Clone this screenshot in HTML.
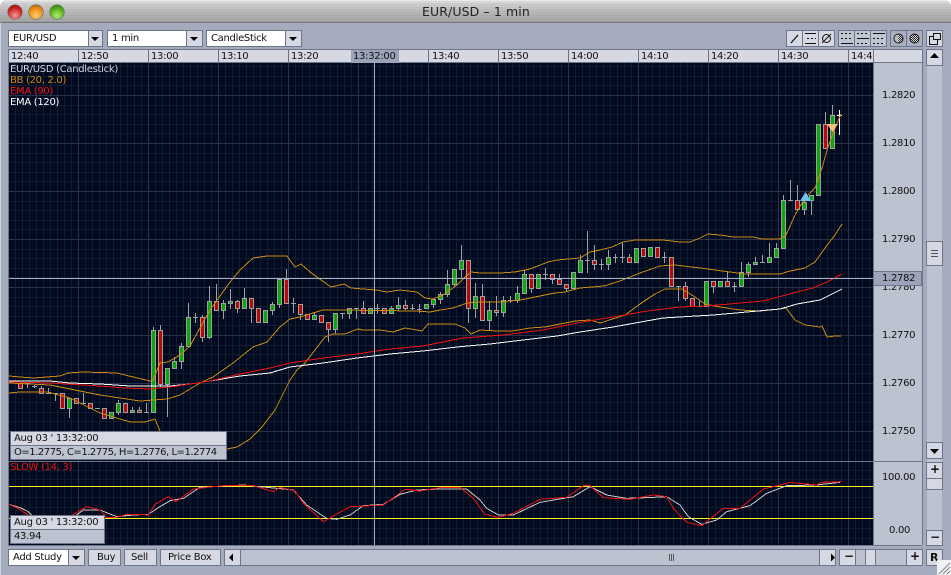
<!DOCTYPE html>
<html><head><meta charset="utf-8"><style>
html,body{margin:0;padding:0;width:951px;height:575px;overflow:hidden;background:#fff}
#w{position:absolute;left:0;top:0;width:951px;height:575px;background:#a3abbd;overflow:hidden;border-radius:7px 7px 0 0}
#tb{position:absolute;left:0;top:0;width:951px;height:22px;background:repeating-linear-gradient(rgba(255,255,255,.05) 0 1px,rgba(0,0,0,.03) 1px 2px),linear-gradient(#ececec,#cfcfcf 15%,#b4b4b4 60%,#a0a0a0);border-bottom:1px solid #777}
.dot{position:absolute;top:5px;width:14px;height:14px;border-radius:50%;box-shadow:0 0 0 .5px #555}
.t{position:absolute;font-family:"DejaVu Sans",sans-serif;font-size:10px;line-height:13px;color:#111;white-space:pre;letter-spacing:-.3px}
.b{position:absolute;box-sizing:border-box;border:1px solid #6d7589;background:#d6d9e3}
.w{background:#fff}
.a{position:absolute;width:0;height:0;border-left:4px solid transparent;border-right:4px solid transparent;border-top:4px solid #000}
svg{position:absolute;left:0;top:0}
</style></head><body><div id="w">
<div id="tb"></div>
<div style="position:absolute;left:0;top:23px;width:1px;height:552px;background:#d0d3dc"></div>
<div class="dot" style="left:8px;background:radial-gradient(circle at 50% 75%,#f59a9a,#c82020 60%,#701010)"></div>
<div class="dot" style="left:29px;background:radial-gradient(circle at 50% 75%,#fbd070,#e88a10 60%,#8a4a05)"></div>
<div class="dot" style="left:50px;background:radial-gradient(circle at 50% 75%,#b0f070,#50a818 60%,#2a6a08)"></div>
<div class="t" style="left:422px;top:4px;font-size:12.5px;line-height:15px;color:#222;letter-spacing:.1px">EUR/USD – 1 min</div>

<div class="b w" style="left:8px;top:30px;width:81px;height:17px"></div><div class="b" style="left:88px;top:30px;width:15px;height:17px"></div><div class="a" style="left:91px;top:37px"></div>
<div class="t" style="left:13px;top:32px">EUR/USD</div>
<div class="b w" style="left:107px;top:30px;width:80px;height:17px"></div><div class="b" style="left:186px;top:30px;width:17px;height:17px"></div><div class="a" style="left:190px;top:37px"></div>
<div class="t" style="left:112px;top:32px">1 min</div>
<div class="b w" style="left:206px;top:30px;width:80px;height:17px"></div><div class="b" style="left:285px;top:30px;width:17px;height:17px"></div><div class="a" style="left:289px;top:37px"></div>
<div class="t" style="left:211px;top:32px">CandleStick</div>

<div class="b" style="left:786px;top:30px;width:17px;height:17px"></div><div class="b" style="left:802px;top:30px;width:17px;height:17px"></div><div class="b" style="left:818px;top:30px;width:17px;height:17px"></div>
<div class="b" style="left:838px;top:30px;width:17px;height:17px;background:#c0c5d2"></div><div class="b" style="left:854px;top:30px;width:17px;height:17px;background:#c0c5d2"></div><div class="b" style="left:870px;top:30px;width:17px;height:17px;background:#c0c5d2"></div>
<div class="b" style="left:890px;top:30px;width:17px;height:17px;background:#a9afbe"></div><div class="b" style="left:906px;top:30px;width:17px;height:17px;background:#a9afbe"></div>
<div class="b" style="left:926px;top:30px;width:17px;height:17px"></div>

<div style="position:absolute;left:8px;top:49px;width:914px;height:14px;background:#d6d9e3;border-top:1px solid #6d7589;border-bottom:1px solid #6d7589;box-sizing:border-box"></div>
<div style="position:absolute;left:351px;top:50px;width:48px;height:13px;background:#9aa3b8"></div>
<div style="position:absolute;left:873px;top:63px;width:49px;height:482px;background:#bcc2cf"></div>
<div style="position:absolute;left:927px;top:49px;width:15px;height:496px;background:#bcc2cf"></div>

<svg width="951" height="575" viewBox="0 0 951 575">
<defs><pattern id="gv" width="7" height="10" patternUnits="userSpaceOnUse" x="1"><rect x="0" width="1" height="10" fill="#121c30"/></pattern>
<pattern id="ht" width="2" height="2" patternUnits="userSpaceOnUse"><rect width="2" height="2" fill="#ddd"/><rect width="1" height="1" fill="#222"/><rect x="1" y="1" width="1" height="1" fill="#222"/></pattern></defs>
<rect x="9" y="63" width="864" height="482" fill="#020a20"/>
<rect x="9" y="63" width="864" height="482" fill="url(#gv)"/>
<path stroke="#121c30" fill="none" shape-rendering="crispEdges" d="M9 66.5H873M9 76.5H873M9 85.5H873M9 105.5H873M9 114.5H873M9 124.5H873M9 133.5H873M9 153.5H873M9 162.5H873M9 172.5H873M9 181.5H873M9 201.5H873M9 210.5H873M9 220.5H873M9 229.5H873M9 249.5H873M9 258.5H873M9 268.5H873M9 277.5H873M9 297.5H873M9 306.5H873M9 316.5H873M9 325.5H873M9 345.5H873M9 354.5H873M9 364.5H873M9 373.5H873M9 393.5H873M9 402.5H873M9 412.5H873M9 421.5H873M9 441.5H873M9 450.5H873M9 470.5H873M9 479.5H873M9 497.5H873M9 507.5H873M9 528.5H873M9 538.5H873"/>
<path stroke="#283248" fill="none" shape-rendering="crispEdges" d="M9 95.5H873M9 143.5H873M9 191.5H873M9 239.5H873M9 287.5H873M9 335.5H873M9 383.5H873M9 431.5H873M78.5 63V545M148.5 63V545M218.5 63V545M288.5 63V545M358.5 63V545M428.5 63V545M498.5 63V545M568.5 63V545M638.5 63V545M708.5 63V545M778.5 63V545M848.5 63V545"/>
<path stroke="#6d7589" fill="none" shape-rendering="crispEdges" d="M8.5 49V545.5H922M78.5 50V63M148.5 50V63M218.5 50V63M288.5 50V63M428.5 50V63M498.5 50V63M568.5 50V63M638.5 50V63M708.5 50V63M778.5 50V63M848.5 50V63M873.5 49V545M922.5 49V545M9 461.5H922"/>

<!-- yellow levels -->
<path stroke="#f8f820" fill="none" shape-rendering="crispEdges" d="M9 486.5H873M9 518.5H873"/>

<!-- wicks -->
<path stroke="#a0a0a0" fill="none" shape-rendering="crispEdges" d="M20.5 383V389M27.5 383V388M25 383.5h5M34.5 385V388M32 386.5h5M41.5 386V394M48.5 388V393M46 393.5h5M55.5 393V401M53 393.5h5M69.5 398V418M83.5 393V404M81 403.5h5M95 408.5h5M118.5 400V415M132.5 407V412M139.5 407V412M146.5 403V412M144 412.5h5M153.5 327V412M160.5 325V387M167.5 368V417M174.5 357V369M181.5 343V369M188.5 303V346M195.5 313V323M193 317.5h5M202.5 315V342M209.5 286V339M216.5 284V310M223.5 300V319M230.5 289V309M237.5 300V313M244.5 288V308M251.5 298V323M258.5 308V323M265.5 310V323M272.5 302V315M279.5 279V308M286.5 269V303M293.5 298V313M291 303.5h5M300.5 304V320M307.5 314V320M314.5 312V319M328.5 322V342M335.5 313V334M342.5 313V319M340 313.5h5M349.5 308V319M356.5 308V319M354 308.5h5M363.5 301V313M377.5 304V314M375 308.5h5M391.5 306V313M398.5 297V311M405.5 300V310M412.5 304V310M410 308.5h5M419.5 304V313M417 309.5h5M433.5 299V308M440.5 292V304M447.5 270V297M454.5 269V287M461.5 245V278M468.5 260V323M475.5 283V318M482.5 284V320M489.5 301V330M496.5 296V316M503.5 296V317M510.5 296V303M508 300.5h5M517.5 286V303M524.5 270V293M531.5 274V293M545.5 268V280M543 274.5h5M552.5 274V284M559.5 274V284M566.5 284V292M580.5 255V272M587.5 231V273M585 260.5h5M594.5 245V270M601.5 259V270M599 264.5h5M608.5 250V270M615.5 254V263M613 257.5h5M622.5 243V263M620 257.5h5M629.5 254V262M664.5 252V263M662 257.5h5M678.5 286V301M676 286.5h5M685.5 282V301M699.5 301V306M697 306.5h5M713.5 281V293M727.5 272V286M734.5 282V292M732 286.5h5M741.5 262V286M748.5 262V277M755.5 257V264M762.5 255V262M760 262.5h5M769.5 243V262M776.5 243V257M783.5 195V248M790.5 180V200M788 200.5h5M797.5 185V209M804.5 200V215M811.5 195V215M825.5 112V148M832.5 105V148"/>
<path stroke="#fff" fill="none" shape-rendering="crispEdges" d="M839.5 110V135M837 115.5h5"/>

<!-- green bodies -->
<path fill="#0aa80a" stroke="#a0a0a0" shape-rendering="crispEdges" d="M67.5 398.5h4v10h-4zM109.5 412.5h4v6h-4zM116.5 403.5h4v9h-4zM130.5 410.5h4v2h-4zM151.5 330.5h4v82h-4zM165.5 368.5h4v16h-4zM172.5 361.5h4v7h-4zM179.5 346.5h4v15h-4zM186.5 317.5h4v29h-4zM207.5 301.5h4v36h-4zM221.5 303.5h4v7h-4zM228.5 301.5h4v2h-4zM242.5 298.5h4v10h-4zM263.5 310.5h4v12h-4zM270.5 304.5h4v6h-4zM277.5 279.5h4v25h-4zM312.5 315.5h4v4h-4zM333.5 313.5h4v16h-4zM347.5 308.5h4v5h-4zM368.5 308.5h4v5h-4zM389.5 308.5h4v5h-4zM396.5 305.5h4v3h-4zM424.5 304.5h4v4h-4zM431.5 299.5h4v5h-4zM438.5 294.5h4v5h-4zM445.5 284.5h4v10h-4zM452.5 269.5h4v15h-4zM459.5 260.5h4v9h-4zM473.5 296.5h4v12h-4zM487.5 310.5h4v10h-4zM501.5 300.5h4v12h-4zM515.5 293.5h4v7h-4zM522.5 274.5h4v19h-4zM536.5 274.5h4v14h-4zM571.5 272.5h4v16h-4zM578.5 260.5h4v12h-4zM606.5 257.5h4v7h-4zM634.5 248.5h4v14h-4zM648.5 247.5h4v9h-4zM704.5 281.5h4v25h-4zM718.5 281.5h4v5h-4zM739.5 272.5h4v14h-4zM746.5 264.5h4v8h-4zM753.5 262.5h4v2h-4zM767.5 257.5h4v5h-4zM774.5 248.5h4v9h-4zM781.5 200.5h4v48h-4zM802.5 202.5h4v7h-4zM809.5 195.5h4v5h-4zM816.5 124.5h4v71h-4zM830.5 115.5h4v33h-4z"/>
<!-- red bodies -->
<path fill="#b80808" stroke="#a0a0a0" shape-rendering="crispEdges" d="M18.5 383.5h4v5h-4zM39.5 388.5h4v5h-4zM60.5 393.5h4v15h-4zM74.5 398.5h4v5h-4zM88.5 403.5h4v5h-4zM102.5 408.5h4v10h-4zM123.5 403.5h4v9h-4zM137.5 410.5h4v2h-4zM158.5 330.5h4v54h-4zM200.5 317.5h4v20h-4zM214.5 301.5h4v9h-4zM235.5 301.5h4v7h-4zM249.5 298.5h4v10h-4zM256.5 308.5h4v14h-4zM284.5 279.5h4v24h-4zM298.5 304.5h4v10h-4zM305.5 314.5h4v5h-4zM319.5 315.5h4v7h-4zM326.5 322.5h4v7h-4zM361.5 308.5h4v5h-4zM382.5 308.5h4v5h-4zM403.5 305.5h4v3h-4zM466.5 260.5h4v48h-4zM480.5 296.5h4v24h-4zM494.5 310.5h4v2h-4zM529.5 274.5h4v14h-4zM550.5 274.5h4v5h-4zM557.5 279.5h4v5h-4zM564.5 284.5h4v4h-4zM592.5 260.5h4v4h-4zM627.5 257.5h4v5h-4zM641.5 248.5h4v8h-4zM655.5 247.5h4v10h-4zM669.5 257.5h4v29h-4zM683.5 286.5h4v12h-4zM690.5 298.5h4v8h-4zM711.5 281.5h4v5h-4zM725.5 281.5h4v5h-4zM795.5 200.5h4v9h-4zM823.5 124.5h4v24h-4z"/>

<!-- Bollinger -->
<g fill="none" stroke="#c98a10" stroke-width="1" shape-rendering="crispEdges">
<polyline points="9,376 20,377 34,378 60,376 68,373 83,372 117,373 125,375 150,381 153,380 160,363 168,362 180,355 190,346 210,310 230,282 240,270 253,258 267,256 287,256 295,267 301,264 310,272 321,280 331,287 344,284 351,288 363,289 376,290 387,292 400,290 417,292 425,298 433,299 443,295 457,285 465,277 471,272 480,273 500,273 515,272 530,269 548,262 557,260 580,258 590,252 600,250 612,247 623,242 635,240 663,240 680,242 690,242 700,238 708,234 720,235 733,237 753,237 762,239 780,239 786,235 795,215 805,198 815,188 822,168 828,147 835,128 841,114"/>
<polyline points="9,383 50,385 100,395 140,401 167,399 180,395 200,383 213,377 233,363 253,347 267,342 280,327 290,319 300,317 313,313 323,310 340,310 415,311 430,312 440,310 453,308 467,303 480,302 500,302 520,300 530,298 555,293 565,292 580,288 604,286 620,281 640,273 660,266 675,265 700,268 730,272 745,274 780,274 790,271 805,268 815,262 825,248 835,235 842,224"/>
<polyline points="9,393 20,392 48,392 70,398 100,413 130,422 145,422 155,419 160,431 165,445 227,449 237,447 250,439 262,427 275,410 290,380 297,370 305,363 315,350 325,337 333,334 345,334 358,329 363,330 380,330 393,332 405,328 417,330 422,331 428,324 455,324 465,328 471,334 480,330 497,331 512,331 530,328 545,327 560,324 575,321 590,320 600,323 625,315 640,304 655,294 665,289 682,289 695,297 705,304 720,307 740,310 760,311 780,309 786,308 795,320 805,325 820,327 822,326 827,337 835,336 841,336"/>
<polyline stroke="#fff" stroke-width="1" points="9,381 50,381 70,383 100,384 130,386 150,386 170,386 190,384 210,381 240,376 270,373 290,367 323,363 357,358 390,354 423,351 457,347 490,344 523,340 557,336 580,332 613,327 663,318 713,315 747,312 780,309 797,304 820,300 842,289"/>
<polyline stroke="#f01010" stroke-width="1" points="9,382 50,383 100,386 125,388 150,389 170,387 190,384 210,381 240,374 270,368 290,363 323,358 357,354 390,349 423,346 463,338 503,335 543,330 577,323 613,317 647,311 680,307 705,306 730,304 763,301 797,292 813,288 827,282 842,274"/>
</g>
<path fill="#6ec0f5" d="M805.5 192L811 201H800z"/>
<path fill="#f5c080" d="M827 124H838L832.5 132z"/>

<!-- stochastic -->
<g transform="translate(0,465) scale(.33333)" fill="none" stroke-width="1" shape-rendering="crispEdges">
<polyline vector-effect="non-scaling-stroke" stroke="#c8c8c8" points="27,118 60,128 85,140 100,155 140,165 210,165 250,135 300,135 350,155 400,150 445,148 480,125 510,107 550,100 580,80 600,67 730,60 800,67 880,75 920,120 980,160 1010,163 1050,150 1090,122 1150,118 1200,88 1250,75 1320,72"/>
<polyline vector-effect="non-scaling-stroke" stroke="#f01010" points="27,118 50,128 100,160 210,155 260,125 300,135 320,158 350,157 380,148 420,148 445,150 465,118 505,95 528,110 580,72 620,67 670,62 760,62 820,80 840,67 885,78 910,115 970,170 1050,125 1150,120 1215,73 1260,78 1320,68"/>
</g>
<g transform="translate(440,465) scale(.33333)" fill="none" stroke-width="1" shape-rendering="crispEdges">
<polyline vector-effect="non-scaling-stroke" stroke="#c8c8c8" points="0,72 80,72 120,105 140,130 175,150 220,150 300,112 400,95 450,65 500,90 560,100 620,98 680,95 720,120 745,155 785,178 830,165 860,140 930,122 980,85 1040,62 1130,60 1200,52"/>
<polyline vector-effect="non-scaling-stroke" stroke="#f01010" points="0,67 60,67 100,100 135,148 175,157 220,145 300,103 380,97 430,62 450,62 490,98 570,103 640,90 680,95 700,130 740,172 785,182 850,130 900,130 970,72 1030,58 1050,52 1130,60 1145,52 1205,50"/>
</g>

<!-- crosshair -->
<path stroke="#a8b0c8" fill="none" shape-rendering="crispEdges" d="M9 278.5H873M374.5 63V545"/>

<!-- toolbar icons -->
<g fill="none" stroke="#111" shape-rendering="crispEdges">
<path d="M791 43L798 35" shape-rendering="auto" stroke-width="1.3"/>
<path d="M805 33.500h11M805 43.500h11M807 38.500h2M811 38.500h2M815 38.500h1"/>
<circle cx="826.500" cy="38.500" r="4" shape-rendering="auto"/><path d="M822 43L831 34" shape-rendering="auto"/>
<path d="M841 33.500h2M845 33.500h2M849 33.500h2M841 38.500h2M845 38.500h2M849 38.500h2M841 43.500h12"/>
<path d="M857 33.500h2M861 33.500h2M865 33.500h2M857 38.500h12M857 43.500h2M861 43.500h2M865 43.500h2"/>
<path d="M873 33.500h12M873 38.500h2M877 38.500h2M881 38.500h2M873 43.500h2M877 43.500h2M881 43.500h2"/>
<rect x="929.500" y="36.500" width="8" height="8" fill="#d6d9e3"/><rect x="933.500" y="33.500" width="7" height="6" fill="#d6d9e3"/>
</g>
<circle cx="898.500" cy="38.500" r="4.500" fill="url(#ht)" stroke="#111"/><path d="M898.500 34.500a4 4 0 0 0 0 8z" fill="#bbb"/>
<circle cx="914.500" cy="38.500" r="4.500" fill="url(#ht)" stroke="#111"/>
</svg>

<div class="t" style="left:11px;top:50px">12:40</div><div class="t" style="left:81px;top:50px">12:50</div><div class="t" style="left:151px;top:50px">13:00</div><div class="t" style="left:221px;top:50px">13:10</div><div class="t" style="left:291px;top:50px">13:20</div><div class="t" style="left:353px;top:50px">13:32:00</div><div class="t" style="left:432px;top:50px">13:40</div><div class="t" style="left:501px;top:50px">13:50</div><div class="t" style="left:571px;top:50px">14:00</div><div class="t" style="left:641px;top:50px">14:10</div><div class="t" style="left:711px;top:50px">14:20</div><div class="t" style="left:781px;top:50px">14:30</div><div class="t" style="left:851px;top:50px;width:21px;overflow:hidden">14:40</div>

<div class="t" style="left:10px;top:63px;color:#d0d4e0">EUR/USD (Candlestick)</div>
<div class="t" style="left:10px;top:74px;color:#c98a10">BB (20, 2.0)</div>
<div class="t" style="left:10px;top:85px;color:#f01010">EMA (90)</div>
<div class="t" style="left:10px;top:96px;color:#fff">EMA (120)</div>
<div class="t" style="left:10px;top:461px;color:#f01010">SLOW (14, 3)</div>

<div class="t" style="left:882px;top:89px">1.2820</div><div class="t" style="left:882px;top:137px">1.2810</div><div class="t" style="left:882px;top:185px">1.2800</div><div class="t" style="left:882px;top:233px">1.2790</div><div class="t" style="left:882px;top:281px">1.2780</div><div class="t" style="left:882px;top:329px">1.2770</div><div class="t" style="left:882px;top:377px">1.2760</div><div class="t" style="left:882px;top:425px">1.2750</div>
<div style="position:absolute;left:873px;top:271px;width:49px;height:15px;box-sizing:border-box;background:#9ba4b8;border:1px solid #6d7589"></div>
<div class="t" style="left:882px;top:272px">1.2782</div>
<div class="t" style="left:882px;top:471px">100.00</div><div class="t" style="left:889px;top:524px">0.00</div>

<div class="b" style="left:10px;top:431px;width:217px;height:15px"></div>
<div class="b" style="left:10px;top:445px;width:217px;height:15px;background:#bcc2cf"></div>
<div class="t" style="left:14px;top:432px">Aug 03 ' 13:32:00</div>
<div class="t" style="left:14px;top:446px;letter-spacing:-.47px">O=1.2775, C=1.2775, H=1.2776, L=1.2774</div>
<div class="b" style="left:10px;top:515px;width:95px;height:15px"></div>
<div class="b" style="left:10px;top:529px;width:95px;height:15px;background:#bcc2cf"></div>
<div class="t" style="left:14px;top:516px">Aug 03 ' 13:32:00</div>
<div class="t" style="left:14px;top:530px">43.94</div>

<div class="b w" style="left:8px;top:549px;width:61px;height:17px"></div><div class="b" style="left:68px;top:549px;width:17px;height:17px"></div><div class="a" style="left:72px;top:556px"></div>
<div class="t" style="left:13px;top:551px">Add Study</div>
<div class="b" style="left:88px;top:549px;width:33px;height:17px"></div><div class="t" style="left:97px;top:551px">Buy</div>
<div class="b" style="left:124px;top:549px;width:33px;height:17px"></div><div class="t" style="left:131px;top:551px">Sell</div>
<div class="b" style="left:160px;top:549px;width:61px;height:17px"></div><div class="t" style="left:168px;top:551px">Price Box</div>
<div class="b" style="left:224px;top:549px;width:612px;height:17px;background:#bcc2cf"></div>
<div class="b" style="left:224px;top:549px;width:17px;height:17px"></div>
<div class="b" style="left:819px;top:549px;width:17px;height:17px"></div>
<div style="position:absolute;left:669px;top:554px;width:6px;height:7px;background:repeating-linear-gradient(90deg,#555 0 1px,transparent 1px 2px)"></div>
<div class="b" style="left:839px;top:549px;width:83px;height:17px;background:#bcc2cf"></div>
<div class="b" style="left:839px;top:549px;width:17px;height:17px"></div>
<div class="b" style="left:865px;top:549px;width:11px;height:17px"></div>
<div class="b" style="left:906px;top:549px;width:17px;height:17px"></div>
<div class="t" style="left:844px;top:550px;font-weight:bold;font-size:12px">−</div>
<div class="t" style="left:910px;top:550px;font-weight:bold;font-size:12px">+</div>
<div class="b" style="left:926px;top:549px;width:17px;height:17px"></div>
<div class="t" style="left:930px;top:551px;font-weight:bold;font-size:11px">R</div>

<div class="b" style="left:926px;top:49px;width:17px;height:17px"></div>
<div class="b" style="left:926px;top:442px;width:17px;height:17px"></div>
<div class="b" style="left:926px;top:241px;width:17px;height:25px"></div>
<div style="position:absolute;left:931px;top:250px;width:7px;height:7px;background:repeating-linear-gradient(#555 0 1px,transparent 1px 3px)"></div>
<div class="b" style="left:926px;top:462px;width:17px;height:17px"></div>
<div class="b" style="left:926px;top:478px;width:17px;height:12px"></div>
<div class="b" style="left:926px;top:530px;width:17px;height:16px"></div>
<div class="t" style="left:930px;top:463px;font-weight:bold;font-size:12px">+</div>
<div class="t" style="left:930px;top:531px;font-weight:bold;font-size:12px">−</div>

<svg width="951" height="575" viewBox="0 0 951 575">
<path fill="#000" d="M934.500 53l4.500 5h-9zM934.500 454l-4.500-5h9zM229 557.500l4-4v8zM835 557.500l-4-4v8z"/>
<rect x="937" y="560" width="14" height="15" fill="#eef0f4"/>
<path stroke="#888" fill="none" d="M939 574L950 563M943 574L950 567M947 574L950 571"/>
</svg>
</div></body></html>
